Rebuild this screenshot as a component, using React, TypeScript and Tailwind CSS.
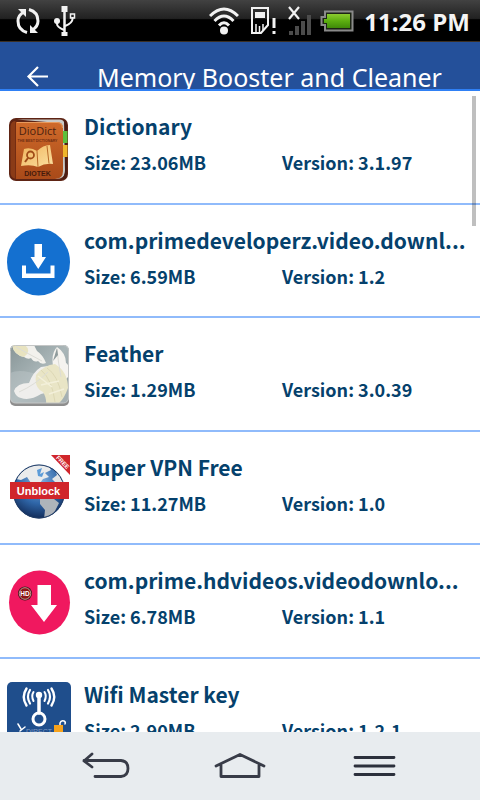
import type { ReactNode } from "react"

type AppInfo = {
  name: string;
  size: string;
  version: string;
  icon: ReactNode;
}

function DictionaryIcon() {
  return (
    <svg viewBox="0 0 64 68" className="w-16 h-17">
      <defs>
        <linearGradient id="cover" x1="0" y1="0" x2="0" y2="1">
          <stop offset="0" stopColor="#cf6a2a" />
          <stop offset="1" stopColor="#a94a19" />
        </linearGradient>
        <linearGradient id="gold" x1="0" y1="0" x2="1" y2="1">
          <stop offset="0" stopColor="#f0b45c" />
          <stop offset="1" stopColor="#fbe0a0" />
        </linearGradient>
      </defs>
      <rect x="2" y="4" width="59" height="63" rx="7" fill="#5e2414" />
      <path d="M10 5.500H53Q58 6 58 12V58Q58 64 50 65L40 65V8Z" fill="#c9c9c6" />
      <path d="M57 6Q60.500 8 60 14V60Q60 65 54 66Q58 62 58 56Z" fill="#4a1d14" />
      <path d="M3.500 12Q4 7 9 7V65Q3.500 64 3.500 59Z" fill="#8a3b17" />
      <path d="M9 8H50Q56 8 56 14V57Q56 65 48 65H9Z" fill="url(#cover)" />
      <path d="M8.500 7V65" stroke="#742c12" strokeWidth="1" />
      <path d="M10 8.500H50Q55 8.500 55.500 14" stroke="#e89a5c" fill="none" />
      <rect x="56" y="17" width="4.500" height="12" fill="#5cc03c" />
      <rect x="56" y="31" width="4.500" height="12" fill="#f0b62c" />
      <text x="30.500" y="21" textAnchor="middle" fontSize="11" fontWeight="500" fill="#4a1f10" className="font-['Open_Sans',sans-serif]">DioDict</text>
      <text x="30.500" y="28" textAnchor="middle" fontSize="3.500" fontWeight="700" fill="#6e2d12" className="font-['Liberation_Sans',sans-serif]">THE BEST DICTIONARY</text>
      <path d="M17 35Q24 33 30 37Q36 31 43 31L46 50Q38 49 31 53Q24 50 14 52Z" fill="url(#gold)" />
      <path d="M30 37L31 53M40 32L42 49.500" stroke="#b86a28" strokeWidth="1" fill="none" />
      <circle cx="23.500" cy="41" r="3.500" fill="none" stroke="#a04c18" strokeWidth="1.800" />
      <path d="M21 44L18 48" stroke="#a04c18" strokeWidth="2" />
      <text x="30.500" y="62" textAnchor="middle" fontSize="7" fontWeight="700" fill="#451a0c" className="font-['Liberation_Sans',sans-serif]">DIOTEK</text>
    </svg>
  )
}

function DownloadIcon() {
  return (
    <svg viewBox="0 0 64 68" className="w-16 h-17">
      <ellipse cx="31.500" cy="34" rx="31.500" ry="33.500" fill="#1470d0" />
      <path d="M27.500 16H35V29H39L31.250 41L23.500 29H27.500Z" fill="#fff" />
      <path d="M15 37.500H19V45.500H43.500V37.500H47.500V50H15Z" fill="#fff" />
    </svg>
  )
}

function FeatherIcon() {
  return (
    <svg viewBox="0 0 64 68" className="w-16 h-17">
      <defs>
        <linearGradient id="mist" x1="0" y1="0" x2="1" y2="1">
          <stop offset="0" stopColor="#879597" />
          <stop offset="0.5" stopColor="#aab6b8" />
          <stop offset="1" stopColor="#8d999b" />
        </linearGradient>
        <clipPath id="tile">
          <rect x="3" y="4" width="59" height="58" rx="5" />
        </clipPath>
      </defs>
      <rect x="3" y="6" width="59" height="59" rx="5" fill="#8e8e8e" />
      <g clipPath="url(#tile)">
        <rect x="3" y="4" width="59" height="58" fill="url(#mist)" />
        <path d="M3 32Q20 24 62 48V62H3Z" fill="#bfc8c9" opacity="0.45" />
        <path d="M5 4Q7 14 17 16Q21 19 24 17Q27 22 31 20Q34 24 39 22Q36 14 30 10L27 4Z" fill="#f2f1ed" />
        <path d="M5 4Q7 14 17 16Q25 10 18 4Z" fill="#e8e3c0" />
        <path d="M7 50Q10 42 22 42Q26 31 34 26L49 24L50 42Q43 52 34 53Q23 60 14 57Q9 56 7 50Z" fill="#efeeec" />
        <path d="M46 25Q44 12 50 6Q59 12 59 22Q63 24 62 35L53 44Z" fill="#f5f3ef" />
        <path d="M29 34Q37 24 48 23Q61 31 61 47Q56 61 49 64L39 66Q40 57 36 51Q27 47 29 34Z" fill="#e9e5c6" />
        <path d="M34 29Q45 38 48 61M40 27Q51 34 55 56" stroke="#dcd7b4" strokeWidth="1" fill="none" />
        <path d="M12 51Q28 44 41 31M9 6Q20 12 35 20M50 8Q51 20 54 36" stroke="#dcdcd6" strokeWidth="1" fill="none" />
        <path d="M31 35L45 46M34 44L52 40M42 53L57 48" stroke="#f3f0da" strokeWidth="1.500" />
        <path d="M50 7L46 20L51 14Z" fill="#8f9b9c" />
      </g>
      <rect x="3.500" y="4.500" width="58" height="57.500" rx="5" fill="none" stroke="#c4c6c6" />
    </svg>
  )
}

function VpnIcon() {
  return (
    <svg viewBox="0 0 64 68" className="w-16 h-17">
      <defs>
        <radialGradient id="sea" cx="0.5" cy="0.3" r="0.7">
          <stop offset="0" stopColor="#86b4e0" />
          <stop offset="0.6" stopColor="#2f66a8" />
          <stop offset="1" stopColor="#122c5a" />
        </radialGradient>
        <clipPath id="globe">
          <ellipse cx="32" cy="36.500" rx="26" ry="27" />
        </clipPath>
      </defs>
      <ellipse cx="32" cy="36.500" rx="26" ry="27" fill="url(#sea)" />
      <g clipPath="url(#globe)">
        <path d="M9 24L12 17Q18 10 29 9L41 9L44 15L38 18L42 22L36 24L33 28H24L20 22L14 25Z" fill="#e9ebec" />
        <path d="M47 11L58 20V29H50L45 24L50 20Z" fill="#e3e5e6" />
        <path d="M33 44H47L52 48L48 56L42 63L37 64L38 55L33 49Z" fill="#aeb4ba" />
        <path d="M30 15L35 13L33 19L37 17L35 22L31 21Z" fill="#5c9cd8" />
      </g>
      <ellipse cx="32" cy="36.500" rx="25.500" ry="26.500" fill="none" stroke="#203c66" />
      <rect x="3" y="27" width="59" height="17" fill="#d0252b" />
      <text x="31.500" y="39.500" textAnchor="middle" fontSize="11" fontWeight="700" fill="#fff" className="font-['Liberation_Sans',sans-serif]">Unblock</text>
      <path d="M44 0H63V20Z" fill="#d0252b" />
      <text x="55" y="9" textAnchor="middle" fontSize="6" fontWeight="700" fill="#fff" transform="rotate(46 55 8)" className="font-['Liberation_Sans',sans-serif]">FREE</text>
    </svg>
  )
}

function HdIcon() {
  return (
    <svg viewBox="0 0 64 68" className="w-16 h-17">
      <ellipse cx="32.500" cy="34.500" rx="30.500" ry="32" fill="#f0185f" />
      <path d="M30.500 17H44V37H50L37 54L24 37H30.500Z" fill="#fff" />
      <circle cx="18" cy="25.500" r="7" fill="#3a1014" />
      <circle cx="18" cy="25.500" r="5.800" fill="#8c1418" stroke="#e0b8b0" strokeWidth="0.800" />
      <text x="18" y="28" textAnchor="middle" fontSize="6.500" fontWeight="700" fill="#fff" className="font-['Liberation_Sans',sans-serif]">HD</text>
    </svg>
  )
}

function WifiKeyIcon() {
  return (
    <svg viewBox="0 0 64 68" className="w-16 h-17">
      <rect x="0" y="0" width="64" height="68" rx="5" fill="#1f4e8c" />
      <g fill="none" stroke="#fff" strokeLinecap="round">
        <path d="M26.500 10Q24 14 26.500 19M37.500 10Q40 14 37.500 19" strokeWidth="2" />
        <path d="M23 8Q19 14.500 23 21.500M41 8Q45 14.500 41 21.500" strokeWidth="2.200" />
        <path d="M19.500 6.500Q14 15 19.500 23.500M44.500 6.500Q50 15 44.500 23.500" strokeWidth="2.400" />
        <path d="M32 14V31" strokeWidth="3.500" />
        <circle cx="32" cy="37" r="6" strokeWidth="3" />
        <path d="M11 42L14 47M13 49L18 45" strokeWidth="1.500" />
        <path d="M53 43V41Q54 38 57 39Q59 40 58 42" strokeWidth="1.500" />
      </g>
      <circle cx="32" cy="13" r="3.200" fill="#fff" />
      <rect x="47" y="43" width="9" height="9" fill="#f6a21c" />
      <text x="32" y="52" textAnchor="middle" fontSize="7" fill="#7f9bc2" className="font-['Liberation_Sans',sans-serif]">DIRECT</text>
    </svg>
  )
}

const apps: AppInfo[] = [
  { name: "Dictionary", size: "23.06MB", version: "3.1.97", icon: <DictionaryIcon /> },
  { name: "com.primedeveloperz.video.downl...", size: "6.59MB", version: "1.2", icon: <DownloadIcon /> },
  { name: "Feather", size: "1.29MB", version: "3.0.39", icon: <FeatherIcon /> },
  { name: "Super VPN Free", size: "11.27MB", version: "1.0", icon: <VpnIcon /> },
  { name: "com.prime.hdvideos.videodownlo...", size: "6.78MB", version: "1.1", icon: <HdIcon /> },
  { name: "Wifi Master key", size: "2.90MB", version: "1.2.1", icon: <WifiKeyIcon /> },
];

function StatusBar() {
  return (
    <div className="h-[42px] shrink-0 flex items-center justify-between pl-4 pr-2.5 border-b border-[#3b2f22] bg-linear-to-b from-[#424242] from-0% via-[#222222] via-45% to-black to-50%">
      <div className="flex items-center gap-3.5">
        <svg viewBox="0 0 24 28" className="w-6 h-7" fill="none" stroke="#f2f2f2" strokeWidth="3">
          <path d="M8 5Q2 8 2 14Q2 23 11 25.500" />
          <path d="M16 23Q22 20 22 14Q22 5 13 2.500" />
          <path d="M2 2H10V10Z" fill="#f2f2f2" stroke="none" />
          <path d="M22 26H14V18Z" fill="#f2f2f2" stroke="none" />
        </svg>
        <svg viewBox="0 0 22 30" className="w-[22px] h-[30px]" fill="none" stroke="#f2f2f2" strokeWidth="2">
          <path d="M10.500 3V27" strokeWidth="2.500" />
          <path d="M3 16V18Q3 21 10 24M18.500 11V13Q18.500 17 11 20" />
          <path d="M7.500 0H13.500V6H7.500ZM7.500 26H13.500V30H7.500Z" fill="#f2f2f2" stroke="none" />
          <circle cx="3" cy="15" r="3" fill="#f2f2f2" stroke="none" />
          <rect x="16.500" y="8" width="4" height="4" strokeWidth="1.500" />
        </svg>
      </div>
      <div className="flex items-center">
        <svg viewBox="0 0 30 28" className="w-[30px] h-7 mr-3" fill="none" stroke="#f2f2f2" strokeWidth="3">
          <path d="M1 9Q15 -5 29 9" />
          <path d="M5.500 14Q15 4 24.500 14" />
          <path d="M10 18.500Q15 13 20 18.500" />
          <circle cx="15" cy="23.500" r="4" fill="#f2f2f2" stroke="none" />
        </svg>
        <svg viewBox="0 0 25 28" className="w-[25px] h-7 mr-3" fill="none" stroke="#f2f2f2" strokeWidth="2">
          <path d="M1 1H17V18L10 26H1Z" />
          <rect x="4" y="5" width="10" height="6" fill="#f2f2f2" stroke="none" />
          <path d="M5 17V25M8.500 19V25M12 17V23" strokeWidth="1.500" />
          <path d="M23 11V21M23 24V27" strokeWidth="3" />
        </svg>
        <svg viewBox="0 0 24 30" className="w-6 h-[30px] mr-2">
          <g fill="#4c4c4c">
            <rect x="1" y="25" width="4" height="4" />
            <rect x="7" y="20" width="4" height="9" />
            <rect x="13" y="15" width="4" height="14" />
            <rect x="19" y="9" width="4" height="20" />
          </g>
          <path d="M1 1L11 13M11 1L1 13" stroke="#f2f2f2" strokeWidth="2.200" />
        </svg>
        <svg viewBox="0 0 34 22" className="w-[34px] h-[22px] mr-2.5">
          <defs>
            <linearGradient id="charge" x1="0" y1="0" x2="0" y2="1">
              <stop offset="0" stopColor="#8ccc30" />
              <stop offset="0.5" stopColor="#5cae10" />
              <stop offset="1" stopColor="#3f8a08" />
            </linearGradient>
          </defs>
          <path d="M5 1.500H32.500V20.500H5V15H1.500V7H5Z" fill="#1c2414" stroke="#8a8a8a" strokeWidth="2" />
          <path d="M7 4H30V18H7V13H4V9H7Z" fill="url(#charge)" />
        </svg>
        <span className="font-['Open_Sans',sans-serif] font-bold text-2xl leading-8 pt-0.5 text-[#f4f4f4] whitespace-nowrap">11:26 PM</span>
      </div>
    </div>
  )
}

function App() {
  return (
    <div className="w-full h-screen flex flex-col overflow-hidden bg-white">
      <StatusBar />

      <header className="h-[49px] shrink-0 flex items-start pt-[17px] pl-[26px] overflow-hidden bg-[#24509a] border-b-2 border-[#2f80f5]">
        <button aria-label="Back" className="w-[23px] shrink-0 pt-[7px]">
          <svg viewBox="0 0 23 22" className="w-[23px] h-[22px]" fill="none" stroke="#fff" strokeWidth="2.200">
            <path d="M22 10.500H2.500M12 1L2.500 10.500L12 20" />
          </svg>
        </button>
        <h1 className="pl-12 font-['Noto_Sans',sans-serif] text-[25px] leading-9 text-white whitespace-nowrap">
          Memory Booster and Cleaner
        </h1>
      </header>

      <main className="relative flex-1 min-h-0 overflow-hidden">
        <ul>
          {apps.map((app) => (
            <li key={app.name} className="odd:h-[114px] even:h-[113px] flex items-start pl-[7px] border-b-2 border-[#90bbfb]">
              <div className="w-16 shrink-0 pt-[23px]">{app.icon}</div>
              <div className="flex-1 min-w-0 ml-[13px] pt-[19px] text-[#05416c] font-['Noto_Sans_CJK_KR',sans-serif] font-bold">
                <h2 className="text-[21px] leading-8 whitespace-nowrap">{app.name}</h2>
                <div className="grid grid-cols-2 pt-1 text-lg leading-8">
                  <span>Size: {app.size}</span>
                  <span>Version: {app.version}</span>
                </div>
              </div>
            </li>
          ))}
        </ul>
        <div className="absolute top-[5px] right-1 w-1 h-[130px] bg-black/25" />
      </main>

      <nav className="h-17 shrink-0 grid grid-cols-3 px-[39px] bg-[#e8ecef]">
        <button aria-label="Go back" className="flex items-center justify-center">
          <svg viewBox="0 0 48 28" className="w-12 h-7" fill="none" stroke="#383c48" strokeWidth="2.800" strokeLinecap="round" strokeLinejoin="round">
            <path d="M10 2L2 9L10 15M2 8.500H39Q46 9 46 16.500Q46 24 39 24.500H13" />
          </svg>
        </button>
        <button aria-label="Home" className="flex items-center justify-center">
          <svg viewBox="0 0 52 28" className="w-13 h-7" fill="none" stroke="#383c48" strokeWidth="2.800" strokeLinecap="round" strokeLinejoin="round">
            <path d="M2 14L26 2.500L50 14M7 13V24.500H45V13" />
          </svg>
        </button>
        <button aria-label="Menu" className="flex items-center justify-center">
          <svg viewBox="0 0 44 24" className="w-11 h-6" stroke="#2c303c" strokeWidth="2.800" strokeLinecap="round">
            <path d="M3 3.500H42M3 12H42M3 20.500H42" />
          </svg>
        </button>
      </nav>
    </div>
  )
}

export default App;
